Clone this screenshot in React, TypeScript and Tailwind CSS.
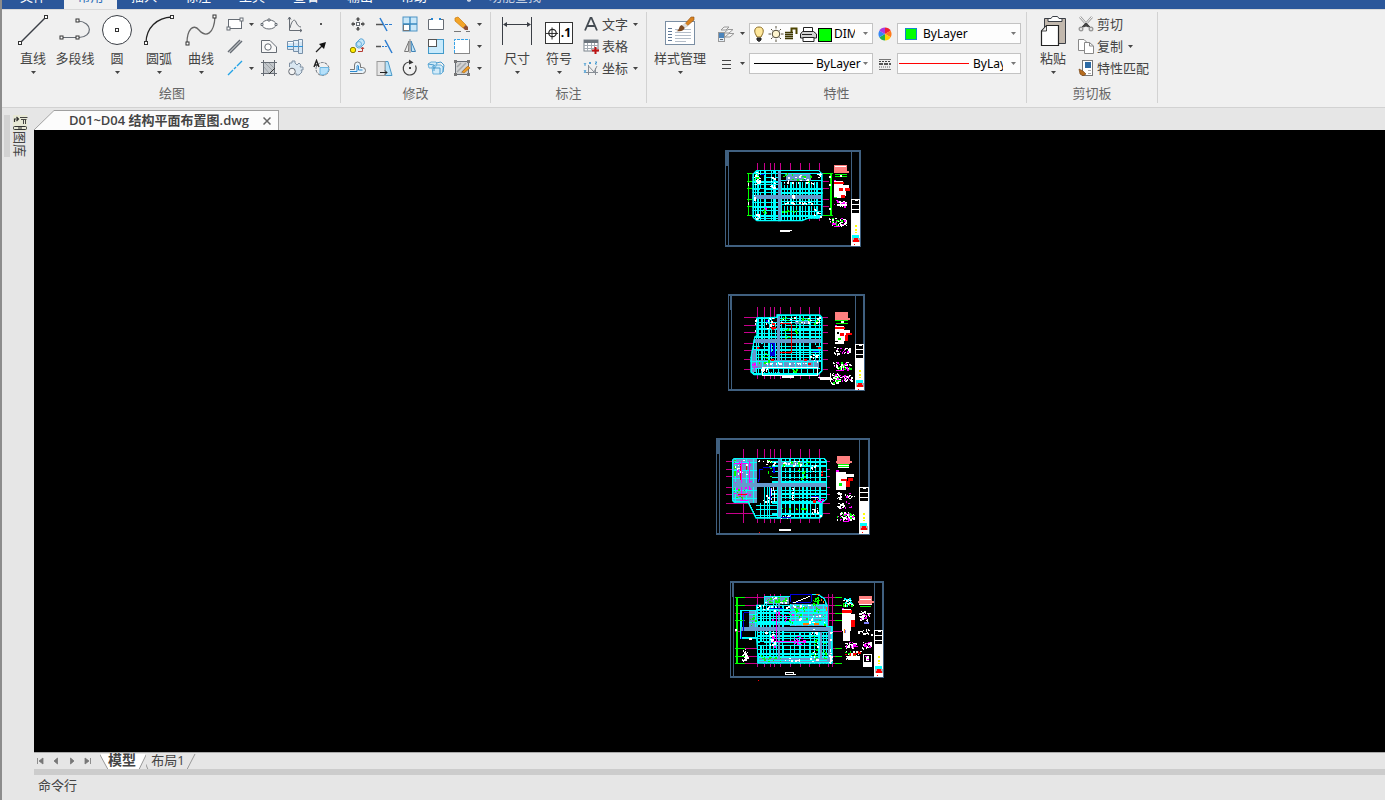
import type { ReactNode } from "react";

/* ---------- shared pieces ---------- */

const UI = "font-['Open_Sans','Noto_Sans_CJK_SC',sans-serif]";

function Caret({ className = "text-[#444]" }: { className?: string }) {
  return (
    <svg viewBox="0 0 5 3" className={`h-[3px] w-[5px] shrink-0 ${className}`} aria-hidden="true">
      <path d="M0 0H5L2.5 3Z" fill="currentColor" />
    </svg>
  );
}

function Glyph({ children, s = 18 }: { children: ReactNode; s?: number }) {
  return (
    <svg
      viewBox={`0 0 ${s} ${s}`}
      width={s}
      height={s}
      fill="none"
      stroke="#666c74"
      strokeWidth="1"
      className="block shrink-0"
      aria-hidden="true"
    >
      {children}
    </svg>
  );
}

function BigTool({ label, icon, caret = true, className = "w-[42px]" }: { label: string; icon: ReactNode; caret?: boolean; className?: string }) {
  return (
    <button className={`flex shrink-0 flex-col items-center ${className}`}>
      <span className="flex h-9 items-center">{icon}</span>
      <span className="whitespace-nowrap text-[13px] leading-5">{label}</span>
      <span className="flex h-2 items-center">{caret && <Caret />}</span>
    </button>
  );
}

function Small({ label, children }: { label: string; children: ReactNode }) {
  return (
    <button aria-label={label} className="flex h-[22px] items-center justify-center">
      <Glyph>{children}</Glyph>
    </button>
  );
}

function More({ label }: { label: string }) {
  return (
    <button aria-label={label} className="flex h-[22px] items-center justify-center">
      <Caret />
    </button>
  );
}

function RowTool({ label, icon, caret = false }: { label: string; icon: ReactNode; caret?: boolean }) {
  return (
    <button className="flex h-[22px] items-center whitespace-nowrap text-[13px] leading-5">
      <span className="flex w-[22px] justify-center">{icon}</span>
      {label}
      {caret && (
        <span className="ml-[5px]">
          <Caret />
        </span>
      )}
    </button>
  );
}

function Group({ title, children, className, pad }: { title: string; children: ReactNode; className: string; pad: string }) {
  return (
    <section className={`flex shrink-0 flex-col border-r border-[#d2d2d2] ${className}`}>
      <div className={`flex h-[70px] items-start ${pad}`}>{children}</div>
      <h2 className="mt-[3px] text-center text-[13px] leading-4 text-[#666]">{title}</h2>
    </section>
  );
}

function Combo({ label, value, art, className = "" }: { label: string; value: string; art: ReactNode; className?: string }) {
  return (
    <div className="flex h-[21px] w-[124px] items-center border border-[#c3c3c3] bg-[#fdfdfd] pr-1">
      {art}
      <select aria-label={label} className={`min-w-0 flex-1 appearance-none overflow-hidden bg-transparent font-['Noto_Sans',sans-serif] text-[12px] leading-[18px] text-black ${className}`}>
        <option>{value}</option>
      </select>
      <span className="flex">
        <Caret className="text-[#777]" />
      </span>
    </div>
  );
}

/* ---------- large icons ---------- */

const Node = ({ x, y }: { x: number; y: number }) => <rect x={x - 1.5} y={y - 1.5} width="3" height="3" fill="#fff" stroke="#333" />;

const LineIcon = (
  <Glyph s={32}>
    <path d="M3 29L29 3" stroke="#3b3f46" strokeWidth="1.5" />
    <Node x={3} y={29} />
    <Node x={29} y={3} />
  </Glyph>
);
const PolyIcon = (
  <Glyph s={32}>
    <path d="M2 23.500H20C34 23 34 8 19 7" strokeWidth="1.2" />
    <Node x={2.5} y={23.5} />
    <Node x={18.5} y={23.5} />
    <Node x={18.5} y={6.5} />
  </Glyph>
);
const CircleIcon = (
  <Glyph s={32}>
    <circle cx="16" cy="16" r="14.500" fill="#fff" stroke="#3b3f46" />
    <Node x={16} y={16} />
  </Glyph>
);
const ArcIcon = (
  <Glyph s={32}>
    <path d="M3 29C3 14 14 3.500 29 3" stroke="#222" strokeWidth="1.3" />
    <Node x={3} y={29} />
    <Node x={29} y={3} />
  </Glyph>
);
const CurveIcon = (
  <Glyph s={32}>
    <path d="M2 29C2 16 8 9 14 16C21 24 29 20 30 3" stroke="#666" strokeWidth="1.3" />
    <Node x={2.5} y={29.5} />
    <Node x={29.5} y={2.5} />
  </Glyph>
);
const DimIcon = (
  <Glyph s={32}>
    <path d="M1.500 3V31M30.500 3V31M3 10.500H29" stroke="#3b3f46" />
    <path d="M2 10.500L6 8V13ZM30 10.500L26 8V13Z" fill="#3b3f46" stroke="none" />
  </Glyph>
);
const SymbolIcon = (
  <span className="mt-1.5 flex h-[22px] w-7 items-center border border-[#333] bg-white text-[12px] font-bold leading-none text-black">
    <svg viewBox="0 0 14 20" className="h-5 w-[14px] border-r border-[#333]" fill="none" stroke="#222" aria-hidden="true">
      <circle cx="7" cy="10" r="4" strokeWidth="1.3" />
      <path d="M0 10.500H13M6.500 4V17" />
    </svg>
    <span className="flex-1 text-center">.1</span>
  </span>
);
const StyleIcon = (
  <Glyph s={32}>
    <rect x="1.500" y="7.500" width="29" height="23" fill="#fff" stroke="#7a8ea3" />
    <path d="M4 14.500H8M4 17.500H8M4 20.500H8M4 23.500H8M4 26.500H8" stroke="#5f7896" />
    <path d="M11 15.500H27M11 18.500H27M11 21.500H27M11 24.500H27M11 27.500H22" stroke="#b4bdc8" />
    <path d="M12 17C16 17 14 12 18 11L21 13C20 17 17 18 12 17Z" fill="#7b4a24" stroke="none" />
    <path d="M19 12L27 3H30V6L22 13Z" fill="#d9821f" stroke="#8c531c" strokeWidth=".6" />
    <path d="M18 11L21 9L24 12L21 14Z" fill="#ddd" stroke="none" />
  </Glyph>
);
const PasteIcon = (
  <Glyph s={32}>
    <path d="M7.500 4.500H28.500V29.500H7.500Z" fill="#c2b8ad" stroke="#3b3f46" />
    <path d="M11 7.500V4.500H14L15.500 2.500H20.500L22 4.500H25V7.500Z" fill="#fff" stroke="#3b3f46" />
    <path d="M9.500 11.500H21.500V31.500H4.500V17Z" fill="#fff" stroke="#222" strokeWidth="1.2" />
    <path d="M9.500 11.500V17H4.500Z" fill="#eee" stroke="#222" strokeWidth=".8" />
  </Glyph>
);

/* ---------- ribbon ---------- */

function DrawGroup() {
  return (
    <Group title="绘图" className="w-[337px]" pad="pl-2">
      <BigTool label="直线" icon={LineIcon} />
      <BigTool label="多段线" icon={PolyIcon} caret={false} />
      <BigTool label="圆" icon={CircleIcon} />
      <BigTool label="圆弧" icon={ArcIcon} />
      <BigTool label="曲线" icon={CurveIcon} />
      <div className="mt-px grid grid-cols-[25px_9px_26px_26px_26px]">
        <Small label="矩形">
          <rect x="2.500" y="4.500" width="13" height="9" fill="#fff" />
          <rect x="1" y="12" width="3" height="3" fill="#fff" />
          <rect x="14" y="3" width="3" height="3" fill="#fff" />
        </Small>
        <More label="矩形选项" />
        <Small label="椭圆">
          <ellipse cx="9" cy="9.500" rx="7" ry="4.500" fill="#fff" />
          <path d="M1 8.500h2v2h-2zM15 8.500h2v2h-2zM8 4h2v2h-2z" fill="#fff" />
        </Small>
        <Small label="函数曲线">
          <path d="M3.500 2V15.500H16M2 4.500L3.500 2L5 4.500M14 14L16 15.500L14 17" />
          <path d="M4 13C6 4 9 4 10 7S13 12 15 12" />
        </Small>
        <Small label="点">
          <rect x="8" y="8" width="2" height="2" fill="#555" stroke="none" />
        </Small>

        <Small label="双线">
          <path d="M2 15L14 3M4 16L16 4" strokeWidth="1.500" />
        </Small>
        <span />
        <Small label="面域">
          <path d="M1.500 3.500H10L16.500 10V15.500H1.500Z" fill="#f8f8f8" />
          <circle cx="8" cy="10" r="3.200" fill="#fff" />
        </Small>
        <Small label="轴">
          <path d="M1.500 4.500H7.500V3.500H12.500V2.500H16.500V16.500H12.500V14.500H7.500V12.500H1.500Z" fill="#d4e6f5" stroke="#7890a8" />
          <path d="M2 5.500H7M8 5H12M13 4H16" stroke="#fff" />
          <path d="M1 9.500H17" stroke="#2d95dd" />
          <path d="M7.500 5V13M12.500 3V15" stroke="#7890a8" />
        </Small>
        <Small label="箭头">
          <path d="M4 15L10 9" stroke="#222" strokeWidth="1.300" />
          <path d="M14 5L12 12L7 7Z" fill="#111" stroke="none" />
        </Small>

        <Small label="构造线">
          <path d="M2 16L7 11M8 10L10 8M11 7L16 2" stroke="#22a3e6" strokeWidth="1.400" />
        </Small>
        <More label="构造线选项" />
        <Small label="填充">
          <rect x="3" y="3" width="12" height="12" fill="#c3c7cb" stroke="none" />
          <path d="M1 3.500H17M1 14.500H17M3.500 1V17M14.500 1V17" />
          <path d="M4 8L9 14M5 4L13 12M9 4L14 9" stroke="#8d9297" strokeWidth=".7" />
          <path d="M9 15L15 9" stroke="#333" />
        </Small>
        <Small label="零件">
          <path d="M3.500 8V4H6V2H9V4L11 6L13 4L15 6L14 8H17V11H15L16 13L13 16H10V14" fill="#d9e6f0" stroke="#8091a3" />
          <circle cx="6" cy="12.500" r="3.300" fill="#f4f4f4" />
        </Small>
        <Small label="文字圆">
          <circle cx="10.500" cy="10" r="6.500" strokeDasharray="3 1" />
          <path d="M8 8.500H16.500V11C16 14 13 16 10 16L8 15Z" fill="#b5e0fa" stroke="#6fb7e2" />
          <path d="M2 8L4.500 1.500L7 8M3 6H6" stroke="#222" strokeWidth="1.400" />
        </Small>
      </div>
    </Group>
  );
}

function ModifyGroup() {
  return (
    <Group title="修改" className="w-[150px]" pad="pl-1">
      <div className="mt-px grid grid-cols-[26px_26px_26px_26px_26px_9px]">
        <Small label="移动">
          <rect x="7.500" y="7.500" width="3" height="3" fill="#fff" />
          <path d="M9 2L11.500 4.500H10V6H8V4.500H6.500ZM9 16L6.500 13.500H8V12H10V13.500H11.500ZM2 9L4.500 6.500V8H6V10H4.500V11.500ZM16 9L13.500 11.500V10H12V8H13.500V6.500Z" fill="#555" stroke="none" />
        </Small>
        <Small label="修剪">
          <path d="M1 9.500H8" stroke="#555" strokeWidth="1.500" />
          <path d="M5 3L12 16" stroke="#2b7cd0" strokeWidth="1.500" />
          <path d="M10 9.500H17" stroke="#2b7cd0" strokeDasharray="3 1" />
        </Small>
        <Small label="阵列">
          <rect x="2" y="2" width="14" height="14" fill="#c9e7f8" stroke="#4f94c4" />
          <rect x="2.500" y="9.500" width="6" height="6" fill="#fff" stroke="#777" />
          <path d="M9 2V16M2 9H16" stroke="#3789c0" strokeWidth="1.300" />
        </Small>
        <Small label="打断">
          <path d="M5 4.500H1.500V14.500H16.500V4.500H13" fill="#fff" />
          <rect x="4" y="3" width="2" height="2" fill="#2386d4" stroke="none" />
          <rect x="12" y="3" width="2" height="2" fill="#2386d4" stroke="none" />
        </Small>
        <Small label="删除">
          <path d="M1 16.500H8M13 16.500H17" stroke="#777" />
          <path d="M2 3L5 2L13 10L10 13L2 6Z" fill="#f3a427" stroke="#cb7c13" strokeWidth=".7" />
          <path d="M13 10L15 12V15H12L10 13Z" fill="#8c4d35" stroke="none" />
        </Small>
        <More label="删除选项" />

        <Small label="复制对象">
          <path d="M7 6L10 3A2.800 2.800 0 0 1 15 4A3 3 0 0 1 15 7L12 10A3 3 0 0 1 7 9Z" fill="#c5e6f8" stroke="#5aa5d6" />
          <circle cx="10" cy="7" r="2.500" stroke="#5aa5d6" strokeWidth=".8" />
          <circle cx="4" cy="13" r="2.700" fill="#ffeb00" stroke="#887b00" />
          <path d="M9 14.500H13.500V11M12 12L13.500 10L15 12" stroke="#b53b33" />
        </Small>
        <Small label="延伸">
          <path d="M1 9.500H6" stroke="#555" strokeWidth="1.500" />
          <path d="M7 9.500H13" stroke="#2b7cd0" strokeDasharray="2 1" />
          <path d="M10 3L17 16" stroke="#2b7cd0" strokeWidth="1.500" />
        </Small>
        <Small label="镜像">
          <path d="M8 4L3.500 14.500H7.500Z" fill="#ececec" stroke="#777" />
          <path d="M10 4L14.500 14.500H10.500Z" fill="#c3e4f7" stroke="#3e83b7" />
          <path d="M9 2V16" stroke="#888" />
        </Small>
        <Small label="缩放">
          <rect x="1.500" y="2.500" width="15" height="14" fill="#c8eafc" stroke="#429aca" />
          <rect x="1.500" y="2.500" width="8" height="7" fill="#fff" stroke="#555" />
        </Small>
        <Small label="选择框">
          <rect x="1.500" y="2.500" width="15" height="14" fill="#fff" stroke="#888" />
          <path d="M1.500 16V2.500H16.500" stroke="#f0f0f0" />
          <path d="M1.500 16V2.500H16.500" stroke="#36a2e8" strokeDasharray="3 1" />
        </Small>
        <More label="选择选项" />

        <Small label="偏移">
          <path d="M1 10.500H5.500V6A3 3 0 0 1 11.500 6V8.500H13.500A3 3 0 0 1 13.500 14.500H1" stroke="#777" fill="#e9f4fb" />
          <path d="M1 12.500H8V7A.8 .8 0 0 1 9.500 7V11H13.500" stroke="#2c8ad0" />
        </Small>
        <Small label="拉伸">
          <path d="M10 2.500H13L17 16.500H10Z" fill="#b9e3f9" stroke="#4c9ac8" />
          <rect x="2" y="2.500" width="8" height="14" fill="#e5e5e5" stroke="#999" />
          <path d="M5 13.500H12M10 11.500L12 13.500L10 15.500" stroke="#222" />
        </Small>
        <Small label="旋转">
          <path d="M8 3A6.500 6.500 0 1 0 14.500 6.500" stroke="#444" strokeWidth="1.200" />
          <path d="M8 .5L12.500 3.500L8 5.500Z" fill="#333" stroke="none" />
          <rect x="8" y="8" width="2" height="2" fill="#444" stroke="none" />
        </Small>
        <Small label="三维阵列">
          <path d="M1 5L4 3H9L10 5L8 9H2ZM5 8L8 6H14L16 8V13L14 15H6Z" fill="#d2ebf9" stroke="#6bb1da" />
          <path d="M9 4L14 3L17 6L16 13M1 5L7 6V12M6 9H13V15" stroke="#4a9bcc" />
        </Small>
        <Small label="编辑填充">
          <rect x="2.500" y="2.500" width="13" height="13" fill="#d2d3d3" />
          <path d="M4 8L8 4M4 13L13 4M8 14L14 8" stroke="#a6a9ab" strokeWidth="1.500" />
          <path d="M1 1h3v3h-3zM14 1h3v3h-3zM1 14h3v3h-3zM14 14h3v3h-3z" fill="#777" stroke="none" />
          <path d="M9 13L15 7L17 9L11 14Z" fill="#ef9c25" stroke="#a46412" strokeWidth=".6" />
        </Small>
        <More label="编辑选项" />
      </div>
    </Group>
  );
}

function AnnotateGroup() {
  return (
    <Group title="标注" className="w-[156px]" pad="pl-[5px]">
      <BigTool label="尺寸" icon={DimIcon} />
      <BigTool label="符号" icon={SymbolIcon} />
      <div className="mt-px flex flex-col">
        <RowTool
          label="文字"
          caret
          icon={
            <Glyph s={16}>
              <path d="M2 14.500L7.500 2H8.500L14 14.500M4.500 10H11.500" stroke="#444b52" strokeWidth="1.800" />
            </Glyph>
          }
        />
        <RowTool
          label="表格"
          icon={
            <Glyph s={16}>
              <rect x="1" y="2" width="14" height="11" fill="#fff" stroke="#7b838b" />
              <rect x="1" y="2" width="14" height="3" fill="#6d757d" stroke="none" />
              <path d="M1 7.500H15M1 10.500H15M4.500 5V13M8.500 5V13M11.500 5V13" stroke="#a3abb3" />
              <path d="M12.500 9V16M9 12.500H16" stroke="#c01313" strokeWidth="2" />
            </Glyph>
          }
        />
        <RowTool
          label="坐标"
          caret
          icon={
            <Glyph s={16}>
              <path d="M5.500 5V15M3 12.500H15M5.500 6L11 12L14 6M12.500 8V15" stroke="#888e96" />
              <path d="M1 3L2 4.500L3 3M2 4.500V6M6 2L8 4M8 2L6 4M12 2H14L12 4H14M1 10L3 13M3 10L1 13" stroke="#2c8dcd" strokeWidth=".8" />
            </Glyph>
          }
        />
      </div>
    </Group>
  );
}

const wheel = ["#f02330", "#ff7a1a", "#ffd400", "#25b34a", "#3487f5", "#a83be0"];

function PropertiesGroup() {
  return (
    <Group title="特性" className="w-[380px]" pad="pl-[7px]">
      <BigTool label="样式管理" icon={StyleIcon} className="w-[52px]" />
      <div className="ml-[10px] mt-[11px] grid grid-cols-[19px_14px_124px_24px_124px] items-center gap-y-[9px]">
        <button aria-label="图层" className="flex justify-center">
          <Glyph>
            <path d="M4 5L7 2H12L9 5ZM7 8L11 4.500H16L12 8ZM8 12L12 8.500H17L13 12Z" fill="#f5f5f5" stroke="#999" />
            <rect x="1.500" y="7.500" width="6" height="9" fill="#e4edf5" stroke="#999" />
            <rect x="2" y="8" width="5" height="5" fill="#4b84bb" stroke="none" />
            <path d="M3 14.500H6" />
          </Glyph>
        </button>
        <button aria-label="图层选项" className="flex justify-center">
          <Caret />
        </button>
        <Combo
          label="图层名称"
          value="DIM_SYMB"
          className="mr-2"
          art={
            <svg viewBox="0 0 84 19" className="h-[19px] w-[84px] shrink-0" fill="none" stroke="#222" aria-hidden="true">
              <path d="M6 11C4 8 4 3 9 3S14 8 12 11L11 13H7Z" fill="#ffe89c" stroke="#8a6b24" />
              <path d="M7 14H11V16L9 17.500L7 16Z" fill="#333" />
              <circle cx="26" cy="10" r="3.800" fill="#fff6d0" stroke="#4b4535" />
              <path d="M26 2V4.500M26 15.500V18M18.500 10H21M31 10H33.500M21 5L22.500 6.500M31 5L29.500 6.500M21 15L22.500 13.500M31 15L29.500 13.500" stroke="#57503c" />
              <path d="M35 8.500H43M35 10.500H43M35 12.500H43M35 14.500H43" stroke="#3d3600" strokeWidth="1.400" />
              <path d="M41.500 8V4.500H46.500V10" stroke="#4d4400" strokeWidth="2" />
              <path d="M53.500 7V3.500H62.500V7" fill="#fff" />
              <path d="M52.500 7.500H63.500L66.500 10V14H50.500V10Z" fill="#d2d2d2" />
              <path d="M53 13.500H64V17.500H53Z" fill="#fff" />
              <path d="M52 10.500H62" />
              <rect x="68.500" y="4.500" width="13" height="13" fill="#0f0" stroke="#000" />
            </svg>
          }
        />
        <button aria-label="颜色" className="flex justify-center">
          <Glyph s={16}>
            {wheel.map((fill, i) => (
              <path key={fill} d="M8 8V1.500A6.500 6.500 0 0 1 13.630 4.750Z" fill={fill} stroke="none" transform={`rotate(${i * 60} 8 8)`} />
            ))}
          </Glyph>
        </button>
        <Combo label="颜色值" value="ByLayer" art={<span className="ml-[7px] mr-[6px] h-3 w-3 shrink-0 border border-[#1684ca] bg-[#0f0]" />} />

        <button aria-label="线宽" className="flex justify-center">
          <Glyph>
            <path d="M5 5.500H14M5 9.500H14M5 13.500H14" stroke="#444" />
          </Glyph>
        </button>
        <button aria-label="线宽选项" className="flex justify-center">
          <Caret />
        </button>
        <Combo label="线宽值" value="ByLayer" art={<span className="ml-1 mr-[3px] h-px w-[59px] shrink-0 bg-black" />} />
        <button aria-label="线型" className="flex justify-center">
          <Glyph s={16}>
            <path d="M2 3.500H14M2 13.500H14" stroke="#777" />
            <path d="M2 5.500H14" stroke="#444" strokeDasharray="2 1" />
            <path d="M2 8H14" stroke="#555" strokeWidth="2" strokeDasharray="4 1" />
            <path d="M2 11H14" stroke="#666" strokeDasharray="1 1" />
          </Glyph>
        </button>
        <Combo label="线型值" value="ByLayer" className="mr-2" art={<span className="ml-px mr-1 h-px w-[70px] shrink-0 bg-[#ff0000]" />} />
      </div>
    </Group>
  );
}

function ClipboardGroup() {
  return (
    <Group title="剪切板" className="w-[131px]" pad="pl-[5px]">
      <BigTool label="粘贴" icon={PasteIcon} />
      <div className="ml-px mt-px flex flex-col">
        <RowTool
          label="剪切"
          icon={
            <Glyph s={16}>
              <path d="M2 1L11 11M14 1L5 11" stroke="#999" strokeWidth="2.500" />
              <path d="M2 1L11 11M14 1L5 11" stroke="#fff" />
              <path d="M8 7L12 11L8 10L4 11Z" fill="#444" stroke="#444" />
              <circle cx="3" cy="13" r="1.800" stroke="#999" strokeWidth="1.400" />
              <circle cx="13" cy="13" r="1.800" stroke="#999" strokeWidth="1.400" />
            </Glyph>
          }
        />
        <RowTool
          label="复制"
          caret
          icon={
            <Glyph s={16}>
              <path d="M.5 1.500H6L9 4.500V12.500H.5Z" fill="#fff" stroke="#888" />
              <path d="M6.500 4.500H11.500L15.500 8V15.500H6.500Z" fill="#fff" stroke="#888" />
              <path d="M11.500 4.500V8H15.500" stroke="#888" />
            </Glyph>
          }
        />
        <RowTool
          label="特性匹配"
          icon={
            <Glyph s={16}>
              <rect x="4.500" y=".5" width="10" height="15" fill="#fff" stroke="#777" />
              <rect x="7" y="2" width="6" height="6" fill="#2c6aa5" stroke="none" />
              <path d="M10 10.500H13M10 13.500H13" stroke="#aaa" />
              <path d="M1 9L5 11L8 14L5 16L2 14Z" fill="#b66c1e" stroke="#6d3d11" strokeWidth=".6" />
            </Glyph>
          }
        />
      </div>
    </Group>
  );
}

/* ---------- drawing sheets: coordinates run in thirds of a screen unit ---------- */

type Box = [number, number, number, number];
type Cloud = [number, number, number, number, number, string];

const q = (n: number) => Math.round(n / 3);
const pathOf = (boxes: Box[]) =>
  boxes
    .map(([x, y, w, h]) => {
      const a = Math.max(1, q(w));
      const b = Math.max(1, q(h));
      return `M${q(x)} ${q(y)}h${a}v${b}h${-a}z`;
    })
    .join("");
const vs = (xs: number[], y1: number, y2: number, w = 3): Box[] => xs.map((x) => [x, y1, w, y2 - y1]);
const hs = (ys: number[], x1: number, x2: number, h = 3): Box[] => ys.map((y) => [x1, y, x2 - x1, h]);

const CY = "#00ffff";
const ST = "#6699cc";
const FR = "#406080";
const AX = "#c8008c";
const WH = "#ffffff";
const GR = "#00ff00";
const MG = "#ff00ff";
const RD = "#ff0000";
const BL = "#0000e0";
const PK = "#ff8080";
const BK = "#000000";
const YE = "#ffff00";

function scatter(clouds: Cloud[]) {
  let seed = 77;
  const next = () => {
    seed = (seed * 1103515245 + 12345) % 2147483648;
    return seed / 2147483648;
  };
  return clouds.map(([x, y, w, h, n, color]) => {
    const boxes: Box[] = [];
    for (let i = 0; i < n; i++) {
      boxes.push([x + next() * w, y + next() * h, next() > 0.5 ? 6 : 3, next() > 0.5 ? 6 : 3]);
    }
    return { color, d: pathOf(boxes) };
  });
}

interface SheetData {
  id: string;
  at: [number, number];
  frame: Box;
  strip: Box;
  divider: number;
  blockTop: number;
  axes: Box[];
  outline: string;
  plan: [string, Box[]][];
  clouds: Cloud[];
  extra: [string, Box[]][];
}

function Sheet({ s }: { s: SheetData }) {
  const [fx, fy, fw, fh] = s.frame;
  const right = fx + fw;
  const bottom = fy + fh;
  const t = s.blockTop;
  const bx = s.divider;
  const bw = right - 3 - bx;
  const frame: Box[] = [
    [fx, fy, fw, 6],
    [fx, bottom - 6, fw, 6],
    [right - 6, fy, 6, fh],
    [fx, fy, 3, fh],
    [fx + 9, fy, 3, fh],
    s.strip,
    [bx, fy, 3, fh],
  ];
  return (
    <g transform={`translate(${s.at[0]} ${s.at[1]})`}>
      <clipPath id={s.id}>
        <path d={s.outline} transform="scale(.33333)" />
      </clipPath>
      <path d={pathOf(frame)} fill={FR} />
      <path d={pathOf(s.axes)} fill={AX} />
      <g clipPath={`url(#${s.id})`}>
        <path d={s.outline} transform="scale(.33333)" fill={BK} />
        {s.plan.map(([c, b], i) => (
          <path key={i} d={pathOf(b)} fill={c} />
        ))}
        <path d={s.outline} transform="scale(.33333)" fill="none" stroke={CY} strokeWidth="8" />
      </g>
      {scatter(s.clouds).map((c, i) => (
        <path key={i} d={c.d} fill={c.color} />
      ))}
      {s.extra.map(([c, b], i) => (
        <path key={i} d={pathOf(b)} fill={c} />
      ))}
      <path d={pathOf([[bx, t, bw, bottom - 3 - t]])} fill={WH} />
      <path
        d={pathOf([
          [bx + 3, t + 3, bw - 6, 12],
          [bx + 3, t + 18, bw - 6, 12],
          [bx + 3, t + 33, bw - 6, 9],
        ])}
        fill={BK}
      />
      <path d={pathOf([[bx + 3, t + 15, 9, 3], [bx + 12, t + 3, 9, 3], [bx + 3, t + 30, 9, 3]])} fill={WH} />
      <path d={pathOf([[bx + 12, t + 78, 6, 6], [bx + 12, t + 90, 6, 6], [bx + 12, t + 99, 6, 3]])} fill={YE} />
      <path d={pathOf([[bx + 3, t + 108, 21, 9]])} fill={CY} />
      <path d={pathOf([[bx + 3, t + 117, 24, 12]])} fill="#b0b0b0" />
      <path d={pathOf([[bx + 9, t + 117, 12, 6], [bx + 6, t + 123, 18, 5], [bx + 9, t + 135, 3, 3]])} fill={RD} />
    </g>
  );
}

const notes = (x: number, y: number): Box[] => [
  [x, y, 39, 24],
  [x + 33, y + 18, 12, 6],
];

const sheets: SheetData[] = [
  {
    id: "plan-d01",
    at: [715, 140],
    frame: [30, 30, 408, 291],
    strip: [30, 30, 12, 48],
    divider: 408,
    blockTop: 177,
    axes: [...vs([126, 147, 165, 177, 195, 225, 255, 282, 312], 69, 243), ...hs([99, 123, 144, 177, 198, 225], 96, 342)],
    outline: "M124 90H312L323 101V226L313 236H280L262 244H125L112 232V102Z",
    plan: [
      [CY, [
        ...vs([120, 135, 150, 168, 180], 93, 244),
        ...vs([126, 147, 174], 93, 244, 6),
        ...hs([99, 111, 132, 156, 186, 210, 234], 112, 198),
        ...hs([123, 144, 198, 225], 112, 198, 6),
        ...vs([198, 207, 216, 234, 243, 261, 270, 288, 297], 126, 240),
        ...vs([225, 252, 279, 303], 126, 240, 6),
        ...hs([99, 120, 183, 192, 213], 198, 323),
        ...hs([144, 156, 225], 198, 323, 6),
      ]],
      [ST, [[112, 165, 211, 12], [189, 90, 9, 155], [213, 102, 75, 21]]],
      [BK, [[135, 105, 12, 15], [135, 147, 12, 9], [171, 102, 9, 15], [201, 105, 9, 15], [201, 195, 110, 3], [201, 132, 24, 3]]],
      [BL, [[138, 102, 12, 3], [285, 102, 3, 9], [261, 117, 9, 3]]],
    ],
    clouds: [
      [115, 96, 20, 40, 16, WH], [165, 110, 12, 36, 14, WH], [204, 99, 84, 24, 18, GR], [204, 105, 84, 18, 10, WH],
      [200, 186, 105, 3, 20, WH], [195, 210, 84, 3, 10, GR], [142, 198, 12, 24, 8, GR], [120, 220, 12, 18, 10, WH],
      [205, 125, 95, 3, 10, WH], [298, 96, 18, 18, 9, WH], [230, 165, 6, 9, 4, WH], [116, 165, 3, 20, 5, WH],
      [118, 100, 18, 30, 5, GR], [148, 202, 3, 9, 3, MG], [297, 205, 18, 24, 8, WH], [342, 234, 51, 21, 40, WH],
      [342, 234, 51, 21, 12, GR], [342, 234, 51, 21, 8, MG], [357, 183, 36, 12, 26, WH], [357, 183, 39, 15, 8, MG],
    ],
    extra: [
      [GR, [...vs([99, 345], 99, 228), [348, 99, 3, 129], ...hs([99, 123, 144, 177, 198, 225], 96, 112), ...hs([99, 225], 323, 354), [360, 102, 36, 3], [360, 108, 36, 3], [357, 168, 9, 6]]],
      [PK, notes(357, 75)],
      [WH, [[360, 78, 33, 3], [375, 105, 6, 6], [357, 123, 27, 48], [384, 135, 18, 9], [384, 144, 9, 24], [366, 165, 24, 9], [195, 270, 36, 3], [195, 273, 30, 3], [98, 129, 3, 9], [98, 186, 3, 9], [342, 108, 6, 6], [342, 132, 6, 6], [342, 204, 6, 6]]],
      [RD, [[357, 126, 30, 6], [372, 144, 12, 9], [390, 144, 15, 9], [378, 165, 12, 9]]],
      [MG, [[357, 120, 6, 3], [363, 180, 6, 3], [357, 258, 18, 3]]],
    ],
  },
  {
    id: "plan-d02",
    at: [715, 285],
    frame: [39, 27, 411, 291],
    strip: [45, 30, 6, 45],
    divider: 420,
    blockTop: 177,
    axes: [...vs([126, 147, 165, 177, 195, 225, 255, 282, 312], 66, 282), ...hs([96, 120, 141, 174, 195, 222, 252], 87, 339)],
    outline: "M124 97L184 95V88H315L323 97V258L310 271H117L106 262V218L118 155L124 150Z",
    plan: [
      [CY, [
        ...vs([129, 147, 168, 180], 97, 270),
        ...vs([138, 159], 97, 270, 6),
        ...vs([198, 210, 228, 243, 264, 300, 312], 90, 225),
        ...vs([252, 282], 90, 225, 6),
        ...hs([99, 111, 120, 144, 183, 207, 216], 106, 323),
        ...hs([129, 153, 192, 225], 106, 323, 6),
        ...hs([105, 135, 201], 195, 323),
        ...vs([114, 123], 160, 270),
      ]],
      [ST, [[106, 161, 217, 12], [187, 88, 9, 183], [126, 225, 186, 24], [108, 195, 15, 66], [240, 108, 45, 9]]],
      [CY, [...vs([141, 156, 171, 186, 204, 222, 240, 258, 276, 294], 231, 246), ...hs([228, 249, 264], 112, 315)]],
      [BK, [[144, 252, 162, 9], [180, 99, 6, 12], [150, 117, 12, 12], [201, 120, 9, 9], [135, 177, 9, 15], [288, 180, 15, 12]]],
      [CY, vs([159, 174, 189, 204, 219, 234, 258, 276, 294], 250, 264)],
    ],
    clouds: [
      [148, 97, 35, 38, 14, WH], [165, 105, 12, 30, 6, RD], [196, 96, 90, 18, 16, WH], [196, 96, 110, 18, 14, GR],
      [125, 205, 40, 30, 10, GR], [140, 232, 168, 3, 18, WH], [135, 245, 36, 12, 9, WH], [110, 225, 15, 25, 9, MG],
      [300, 95, 15, 20, 8, WH], [205, 120, 15, 40, 8, GR], [282, 200, 27, 30, 10, WH], [230, 252, 15, 9, 9, GR],
      [235, 120, 12, 40, 6, GR], [120, 100, 3, 60, 6, WH], [357, 186, 12, 21, 14, WH], [384, 186, 21, 18, 14, WH], [360, 190, 39, 12, 8, MG],
      [354, 231, 54, 21, 38, WH], [354, 231, 54, 21, 14, GR], [354, 231, 54, 21, 12, MG], [348, 264, 27, 30, 42, WH],
      [382, 270, 27, 18, 20, WH], [350, 268, 24, 22, 12, GR], [350, 268, 60, 18, 14, MG],
    ],
    extra: [
      [RD, [[229, 117, 3, 87], [196, 115, 33, 3], [196, 202, 33, 3], [126, 186, 6, 6], [168, 222, 9, 6], [267, 222, 9, 6], [279, 234, 9, 6], [309, 186, 9, 6], [171, 114, 9, 6]]],
      [BL, [[166, 174, 3, 39], [175, 174, 6, 39], [166, 174, 15, 3], [168, 201, 9, 12], [294, 198, 18, 3], [153, 105, 6, 6]]],
      [WH, [[142, 247, 168, 3], [142, 270, 168, 3], [142, 247, 3, 24], [307, 247, 3, 24], [201, 272, 36, 6], [310, 276, 36, 3], [315, 279, 30, 6], [345, 264, 3, 27], [360, 123, 27, 54], [387, 135, 18, 9], [387, 144, 9, 24], [366, 87, 6, 3], [378, 108, 9, 6]]],
      [PK, notes(360, 81)],
      [GR, [[360, 105, 39, 3], [363, 114, 36, 3], [369, 159, 9, 6]]],
      [RD, [[360, 126, 30, 6], [375, 144, 12, 9], [393, 144, 18, 6], [390, 150, 9, 18]]],
      [MG, [[360, 120, 6, 3], [363, 255, 24, 3]]],
      [BK, [[366, 141, 6, 6], [360, 168, 9, 3]]],
    ],
  },
  {
    id: "plan-d03",
    at: [710, 430],
    frame: [18, 24, 462, 291],
    strip: [18, 24, 12, 48],
    divider: 447,
    blockTop: 171,
    axes: [...vs([99, 141, 162, 180, 192, 210, 240, 270, 297, 327], 57, 279), ...hs([93, 117, 138, 171, 192, 219, 249], 48, 360)],
    outline: "M72 84H344L351 92V208L338 218V259L330 266H137L113 218H72L66 212V90Z",
    plan: [
      [ST, [[66, 84, 76, 136]]],
      [CY, [
        ...vs([75, 108, 129], 84, 218),
        ...hs([96, 120, 144, 180, 204], 66, 142),
        ...vs([162, 171, 177, 201], 170, 266),
        ...hs([93, 96, 123, 141, 180, 201, 219], 186, 351),
        ...hs([105, 153, 189, 213, 249], 186, 351, 6),
        ...vs([213, 225, 252, 267, 300, 315], 88, 266),
        ...vs([237, 276, 288, 327], 88, 266, 6),
        ...hs([225, 237, 255], 137, 207),
        ...vs([150], 220, 266),
      ]],
      [ST, [[66, 159, 285, 12], [204, 84, 8, 182], [210, 95, 70, 10]]],
      [BK, [[145, 104, 32, 52], [216, 111, 80, 3], [216, 129, 110, 3], [216, 147, 90, 3], [216, 207, 90, 3], [120, 224, 9, 12]]],
      [MG, [...vs([93, 117], 93, 160), ...vs([93], 171, 210), ...hs([99], 72, 110), ...hs([210], 90, 115)]],
      [RD, [[90, 102, 3, 20], [90, 130, 3, 20], [84, 192, 27, 3], [108, 108, 3, 12]]],
    ],
    clouds: [
      [68, 88, 6, 60, 8, GR], [70, 92, 50, 118, 20, MG], [68, 175, 36, 33, 9, GR], [143, 90, 50, 12, 12, WH],
      [210, 92, 70, 15, 18, WH], [210, 92, 110, 15, 14, GR], [245, 165, 6, 45, 9, WH], [160, 190, 27, 30, 11, WH],
      [215, 233, 80, 3, 12, GR], [300, 95, 15, 35, 8, WH], [330, 120, 6, 18, 5, RD], [318, 205, 21, 12, 7, MG],
      [305, 235, 25, 21, 12, WH], [173, 85, 9, 55, 8, GR], [208, 252, 33, 9, 8, WH], [250, 110, 36, 40, 6, GR],
      [380, 186, 12, 21, 16, WH], [405, 192, 27, 12, 12, WH], [380, 219, 21, 15, 16, WH], [380, 188, 50, 45, 9, MG],
      [381, 246, 51, 21, 40, WH], [381, 246, 51, 21, 14, MG], [381, 246, 51, 21, 10, GR], [68, 88, 45, 50, 10, WH],
    ],
    extra: [
      [BL, [[147, 117, 3, 33], [150, 117, 9, 3], [159, 111, 30, 3], [189, 111, 6, 18], [180, 174, 3, 36], [213, 261, 30, 3], [303, 198, 24, 3], [144, 147, 3, 9]]],
      [WH, [[183, 174, 3, 24], [189, 171, 3, 12], [192, 183, 3, 33], [207, 297, 36, 6], [378, 126, 30, 54], [408, 132, 24, 9], [402, 141, 9, 30], [384, 105, 33, 3], [384, 111, 33, 3], [303, 201, 21, 3]]],
      [PK, [[381, 78, 39, 24], [378, 93, 48, 6]]],
      [GR, [[384, 102, 33, 3], [384, 108, 33, 3], [387, 159, 9, 9]]],
      [RD, [[393, 147, 18, 6], [414, 144, 15, 9], [408, 153, 12, 18], [309, 210, 9, 9], [147, 306, 3, 3]]],
      [MG, [[378, 120, 9, 6], [399, 273, 18, 3]]],
    ],
  },
  {
    id: "plan-d04",
    at: [720, 572],
    frame: [30, 27, 462, 291],
    strip: [36, 27, 6, 48],
    divider: 462,
    blockTop: 174,
    axes: [...vs([111, 132, 150, 162, 180, 210, 240, 267, 297, 324, 336], 66, 285), ...hs([75, 99, 123, 144, 177, 228, 252, 273], 45, 366)],
    outline: "M132 72H210V66H295L314 78L323 100V162H338V275H112V248L108 200H60V114H108V98H132Z",
    plan: [
      [ST, [[132, 72, 75, 24], [87, 114, 24, 50], [210, 96, 113, 66], [325, 162, 15, 113]]],
      [CY, [
        ...vs([63, 105, 111, 129, 138, 159, 168], 84, 275),
        ...vs([120, 147, 186], 100, 275, 6),
        ...vs([210, 222, 252, 282], 180, 275),
        ...vs([237, 267, 294], 180, 275, 6),
        ...vs([210, 225, 246, 264, 279, 309], 96, 162),
        ...hs([99, 111, 132, 147, 180, 198, 219, 231, 261], 110, 325),
        ...hs([120, 153, 189, 207, 243, 252], 110, 325, 6),
        ...hs([126, 150], 87, 112),
        ...vs([300, 309, 318, 327, 333], 180, 275),
      ]],
      [ST, [[60, 165, 278, 12], [174, 96, 6, 179], [112, 258, 226, 12], [300, 180, 6, 88], [324, 171, 6, 104]]],
      [BK, [[66, 126, 18, 36], [63, 180, 42, 18], [120, 210, 12, 9], [189, 213, 30, 6], [240, 201, 30, 6], [213, 72, 60, 21]]],
      [CY, [...hs([114, 138, 150, 264], 112, 323), ...hs([198], 60, 180)]],
    ],
    clouds: [
      [134, 75, 66, 18, 22, GR], [134, 75, 66, 18, 9, WH], [112, 98, 55, 15, 16, WH], [148, 180, 15, 42, 18, WH],
      [190, 98, 100, 9, 16, WH], [210, 98, 80, 20, 16, GR], [278, 70, 18, 48, 26, GR], [205, 125, 110, 33, 14, WH],
      [205, 125, 110, 33, 14, GR], [270, 170, 21, 90, 16, GR], [270, 170, 21, 90, 14, WH], [120, 250, 60, 18, 16, GR],
      [190, 258, 110, 9, 14, WH], [325, 180, 9, 90, 16, WH], [300, 185, 20, 80, 9, GR], [152, 190, 12, 35, 7, MG],
      [66, 230, 15, 33, 24, WH], [88, 126, 18, 33, 8, GR], [223, 198, 9, 22, 9, MG], [180, 118, 40, 30, 9, MG],
      [369, 78, 27, 21, 24, WH], [366, 78, 33, 21, 11, CY], [366, 93, 33, 6, 9, GR], [417, 117, 33, 27, 32, WH], [417, 120, 33, 21, 7, MG],
      [414, 168, 39, 18, 16, WH], [375, 210, 33, 15, 24, WH], [375, 210, 33, 15, 12, MG], [375, 235, 45, 24, 28, WH],
      [375, 235, 45, 12, 12, RD], [375, 235, 33, 18, 9, GR], [426, 207, 27, 21, 18, WH], [430, 210, 18, 18, 8, MG],
    ],
    extra: [
      [GR, [[48, 75, 6, 198], ...hs([75, 99, 144, 228, 252, 273], 45, 75), ...hs([75, 99, 123, 144, 228, 252, 273], 345, 366), [420, 102, 33, 3]]],
      [BL, [[210, 66, 63, 3], [273, 66, 3, 24], [216, 90, 57, 3], [210, 66, 3, 24], [69, 123, 3, 54], [72, 120, 15, 3], [63, 177, 3, 24], [147, 108, 42, 3]]],
      [WH, [[219, 90, 9, 3], [228, 87, 6, 3], [234, 84, 9, 3], [243, 81, 6, 3], [249, 78, 9, 3], [258, 75, 6, 3], [264, 72, 6, 3], [366, 111, 27, 66], [384, 126, 21, 24], [369, 177, 21, 30], [417, 96, 39, 3], [195, 300, 27, 3], [195, 303, 3, 6], [219, 303, 3, 3], [195, 306, 33, 3], [384, 252, 36, 12], [429, 246, 27, 3], [429, 270, 27, 15], [429, 246, 3, 30], [453, 246, 3, 30], [438, 252, 9, 15], [87, 198, 9, 6], [45, 171, 6, 6], [135, 180, 9, 6]]],
      [PK, [[417, 72, 39, 24], [414, 87, 48, 6]]],
      [WH, [[420, 81, 33, 3]]],
      [RD, [[366, 114, 30, 9], [393, 144, 12, 21], [114, 324, 3, 3]]],
      [MG, [[366, 108, 6, 3], [168, 120, 3, 90], [168, 207, 84, 3], [174, 120, 6, 9], [156, 141, 6, 6], [249, 204, 9, 9], [231, 192, 12, 3], [243, 198, 6, 3], [234, 216, 12, 3], [435, 252, 6, 3], [441, 261, 6, 3]]],
      ["#ff8000", [[249, 153, 18, 6], [282, 153, 15, 6], [288, 66, 9, 3], [303, 81, 3, 6], [309, 87, 3, 6], [318, 105, 3, 12], [372, 171, 3, 12]]],
      ["#8080ff", [[432, 150, 15, 6], [375, 174, 3, 9]]],
    ],
  },
];

function Canvas() {
  return (
    <main className="min-h-0 flex-1 overflow-hidden bg-black">
      <svg className="block h-full w-full" shapeRendering="crispEdges" role="img" aria-label="结构平面布置图">
        <g transform="translate(-34 -130)">
          {sheets.map((s) => (
            <Sheet key={s.id} s={s} />
          ))}
        </g>
      </svg>
    </main>
  );
}

/* ---------- page ---------- */

const menu = ["插入", "标注", "工具", "查看", "输出", "帮助"];

export default function App() {
  return (
    <div className={`flex h-screen flex-col overflow-hidden border-l-2 border-[#8c8c8c] bg-[#e6e6e6] text-[#444] ${UI}`}>
      <nav className="flex h-[9px] shrink-0 items-end overflow-hidden bg-[#2b579a] text-[13px] leading-4 text-white">
        <a href="#file" className="w-[62px] pb-[5px] text-center">文件</a>
        <a href="#home" className="flex h-[9px] w-[53px] shrink-0 items-end justify-center bg-[#f0f0f0] pb-[5px] text-[#2b6cb8]">常用</a>
        {menu.map((m) => (
          <a key={m} href="#menu" className="w-[54px] pb-[5px] text-center">
            {m}
          </a>
        ))}
        <svg viewBox="0 0 8 9" className="ml-6 h-[9px] w-2" aria-hidden="true">
          <path d="M2 0H6V1L4 2L2 1Z" fill="#c8d2e2" />
        </svg>
        <a href="#find" className="ml-4 pb-[5px] text-[#c8d2e2]">功能查找</a>
      </nav>

      <header className="flex h-[99px] shrink-0 overflow-hidden border-b border-t border-b-[#d2d2d2] border-t-[#d9d9d9] bg-[#f0f0f0] pb-1 pl-0.5 pt-[2px]">
        <DrawGroup />
        <ModifyGroup />
        <AnnotateGroup />
        <PropertiesGroup />
        <ClipboardGroup />
      </header>

      <div className="flex min-h-0 flex-1">
        <aside className="flex w-8 shrink-0 items-start pl-0.5 pt-[7px]">
          <span className="h-[42px] w-[6px] bg-[#d2d2d2]" />
          <button className="ml-[2px] flex flex-col items-center text-[13px] leading-4">
            <svg viewBox="0 0 16 16" className="h-4 w-4" fill="none" stroke="#333" aria-hidden="true">
              <rect x="1" y="0" width="14" height="16" fill="#e7e8d5" stroke="none" />
              <path d="M2.500 7V4H6M4.500 2L6.500 4L4.500 6" strokeWidth="1.200" />
              <path d="M8 2.500H15.500M9 4.500H14.500M11.500 5V9M13.500 5V9" strokeWidth=".9" />
              <rect x="1.500" y="11.500" width="13" height="3" rx="1" />
              <path d="M6 13H10" />
            </svg>
            <span className="[text-orientation:sideways] [writing-mode:vertical-rl]">图库</span>
          </button>
        </aside>

        <div className="flex min-w-0 flex-1 flex-col">
          <div className="flex h-[22px] shrink-0 items-end">
            <svg viewBox="0 0 20 20" className="h-5 w-5 shrink-0" aria-hidden="true">
              <path d="M0 20L20 0V20Z" fill="#fcfcfc" />
              <path d="M0 20L20 .5" stroke="#a0a0a0" />
            </svg>
            <div className="flex h-5 items-center border-r border-t border-[#a0a0a0] bg-[#fcfcfc] pb-0.5 pl-[15px] pr-[3px]">
              <button className="whitespace-nowrap text-[13px] font-semibold leading-4">D01~D04 结构平面布置图.dwg</button>
              <button aria-label="关闭" className="ml-[14px] mt-0.5 flex h-4 w-3 items-center">
                <svg viewBox="0 0 8 8" className="h-2 w-2" fill="none" stroke="#666" strokeWidth="1.500" aria-hidden="true">
                  <path d="M.5 .5L7.500 7.500M7.500 .5L.5 7.500" />
                </svg>
              </button>
            </div>
          </div>

          <Canvas />

          <div className="flex h-[17px] shrink-0 border-t border-[#aaa]">
            <div className="flex w-[66px] items-center gap-2 pl-[2px]">
              {[
                ["首页", "M1.500 1V7M7 1V7L3 4Z"],
                ["上一页", "M5.500 1V7L2 4Z"],
                ["下一页", "M2.500 1V7L6 4Z"],
                ["末页", "M6.500 1V7M1 1V7L5 4Z"],
              ].map(([name, d]) => (
                <button key={name} aria-label={name}>
                  <svg viewBox="0 0 8 8" className="block h-2 w-2" fill="#777" stroke="#777" strokeWidth=".8" aria-hidden="true">
                    <path d={d} />
                  </svg>
                </button>
              ))}
            </div>
            <button className="grid w-[46px] items-center">
              <svg viewBox="0 0 46 16" className="col-start-1 row-start-1 h-4 w-[46px]" fill="#fff" stroke="#999" aria-hidden="true">
                <path d="M-1 -1L8 15.500H39L47 -1" />
              </svg>
              <span className="col-start-1 row-start-1 pb-1 pr-0.5 text-center text-[14px] font-bold leading-[14px]">模型</span>
            </button>
            <button className="grid w-[50px] items-center">
              <svg viewBox="0 0 50 16" className="col-start-1 row-start-1 h-4 w-[50px]" fill="none" stroke="#999" aria-hidden="true">
                <path d="M-2 6L2 15.500H41L49 0" />
              </svg>
              <span className="col-start-1 row-start-1 pb-1 pr-1.5 text-center text-[13px] leading-[14px]">布局1</span>
            </button>
          </div>
          <div className="h-[6px] shrink-0 bg-[#ccc]" />
          <footer className="h-[25px] shrink-0 pl-1 text-[13px] leading-5">命令行</footer>
        </div>
      </div>
    </div>
  );
}
